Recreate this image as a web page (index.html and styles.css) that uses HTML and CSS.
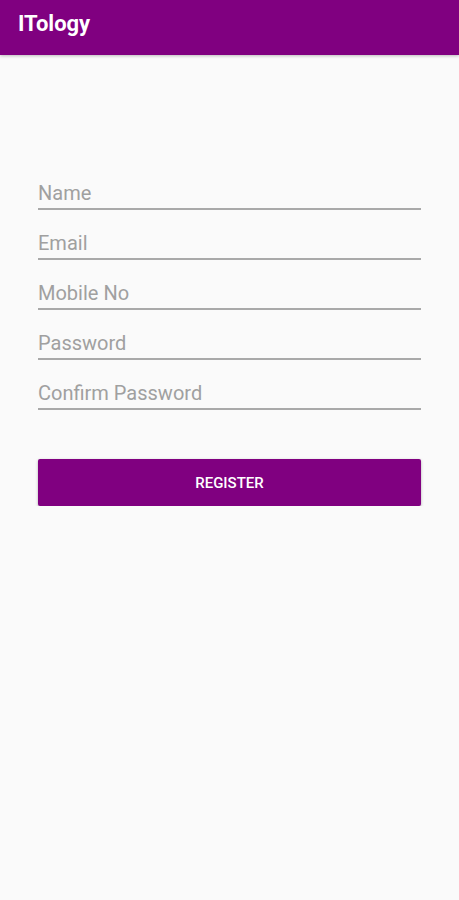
FILE: index.html
```html
<!DOCTYPE html>
<html lang="en">
<head>
    <meta charset="UTF-8">
    <meta name="viewport" content="width=device-width, initial-scale=1.0">
    <title>ITology</title>
    <link rel="stylesheet" href="styles.css">
</head>
<body>
    <div class="app-bar">ITology</div>
    <div class="form-container">
        <form id="registerForm">
            <div class="form-group"><input type="text" placeholder="Name"></div>
            <div class="form-group"><input type="email" placeholder="Email"></div>
            <div class="form-group"><input type="tel" placeholder="Mobile No"></div>
            <div class="form-group"><input type="password" placeholder="Password"></div>
            <div class="form-group"><input type="password" placeholder="Confirm Password"></div>
            <button type="button" class="register-btn">REGISTER</button>
        </form>
    </div>
</body>
</html>
```

FILE: styles.css
```css
body {
    font-family: Roboto, "Noto Sans", sans-serif;
    background-color: #fafafa;
    margin: 0;
}
.app-bar {
    background-color: #800080;
    color: white;
    height: 55px;
    box-sizing: border-box;
    padding: 11px 18px 0;
    font-size: 22px;
    font-weight: 700;
    box-shadow: 0 1px 3px rgba(0, 0, 0, 0.25);
}
.form-container {
    padding: 122px 38px 0;
}
.form-group {
    height: 50px;
    box-sizing: border-box;
    display: flex;
    align-items: flex-end;
}
.form-group:first-child {
    height: 33px;
}
.form-group input {
    width: 100%;
    border: none;
    border-bottom: 2px solid #a9a9a9;
    background: transparent;
    padding: 0 0 3px;
    font-family: inherit;
    font-size: 20px;
    color: #333;
    outline: none;
}
.form-group input::placeholder {
    color: #a0a0a0;
}
.register-btn {
    width: 100%;
    height: 47px;
    margin-top: 49px;
    background-color: #800080;
    color: white;
    border: none;
    border-radius: 2px;
    font-family: inherit;
    font-size: 15px;
    font-weight: 500;
    box-shadow: 0 1px 3px rgba(0, 0, 0, 0.3);
}
```
